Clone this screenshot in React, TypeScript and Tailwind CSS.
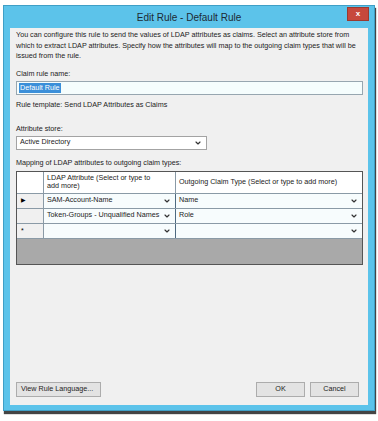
import { ChevronDown } from 'lucide-react';

const font = { fontFamily: '"Liberation Sans", Arial, sans-serif' };

function Chevron() {
  return <ChevronDown className="w-[8px] h-[8px] text-[#333]" strokeWidth={3.5} />;
}

function GridRow({ marker, attr, claim }: { marker?: string; attr: string; claim: string }) {
  return (
    <div className="flex h-[15px] border-t border-[#8a9aa6]">
      <div className="w-[27px] border-r border-[#8a9aa6] bg-[#f0f0f0] flex items-center pl-[4px] text-[7px] text-black">
        {marker === 'arrow' && <span className="text-[6px]">▶</span>}
        {marker === 'star' && <span className="text-[7px] leading-none">*</span>}
      </div>
      <div className="w-[132px] border-r border-[#4e6a80] flex items-center justify-between pl-[3px] pr-[4px] bg-[#f7fcfd] text-[7.2px] text-[#222]">
        <span>{attr}</span>
        <Chevron />
      </div>
      <div className="flex-1 flex items-center justify-between pl-[3px] pr-[4px] bg-[#f7fcfd] text-[7.2px] text-[#222]">
        <span>{claim}</span>
        <Chevron />
      </div>
    </div>
  );
}

export default function App() {
  return (
    <div className="w-[378px] h-[421px] bg-white overflow-hidden pt-[5px] pl-[3px]" style={font}>
      {/* window frame */}
      <div className="w-[372px] h-[406px] bg-[#5cc3ea] border border-[#3f9fc6] shadow-[1px_3px_1px_#444] flex flex-col">
        {/* title bar */}
        <div className="relative h-[22px] flex items-center justify-center text-[10px] text-[#1c2a33]">
          Edit Rule - Default Rule
          <div className="absolute right-[5px] top-[1px] w-[22px] h-[14px] bg-[#c7483c] border border-[#9a3a30] flex items-center justify-center text-white text-[8px] font-bold">
            x
          </div>
        </div>

        {/* client area */}
        <div className="mx-[6px] flex-1 mb-[5px] bg-[#f0f0f0] px-[6px] pt-[2px] text-[7.2px] text-[#222] flex flex-col">
          <p className="leading-[10.5px] whitespace-nowrap">
            You can configure this rule to send the values of LDAP attributes as claims. Select an attribute store from
            <br />
            which to extract LDAP attributes. Specify how the attributes will map to the outgoing claim types that will be
            <br />
            issued from the rule.
          </p>

          <div className="mt-[7px] leading-[10px]">Claim rule name:</div>
          <div className="mt-[2px] h-[14px] w-[347px] border border-[#97a6b0] bg-[#f5fdfd] flex items-center pl-[2px]">
            <span className="bg-[#3b8fd9] text-white px-[1px] leading-[10px]">Default Rule</span>
          </div>

          <div className="mt-[5px] leading-[10px]">Rule template: Send LDAP Attributes as Claims</div>

          <div className="mt-[14px] leading-[10px]">Attribute store:</div>
          <div className="mt-[2px] h-[14px] w-[191px] border border-[#a3a3a3] bg-white flex items-center justify-between pl-[3px] pr-[4px]">
            <span>Active Directory</span>
            <Chevron />
          </div>

          <div className="mt-[8px] leading-[10px]">Mapping of LDAP attributes to outgoing claim types:</div>

          {/* grid */}
          <div className="mt-[3px] w-[347px] h-[94px] border border-[#555] bg-[#a9a9a9] flex flex-col">
            <div className="flex h-[21px] bg-white">
              <div className="w-[27px] border-r border-[#8a9aa6]" />
              <div className="w-[132px] border-r border-[#8a9aa6] px-[3px] pt-[2px] leading-[8.5px] whitespace-nowrap">
                LDAP Attribute (Select or type to
                <br />
                add more)
              </div>
              <div className="flex-1 px-[3px] flex items-center">
                Outgoing Claim Type (Select or type to add more)
              </div>
            </div>
            <GridRow marker="arrow" attr="SAM-Account-Name" claim="Name" />
            <GridRow attr="Token-Groups - Unqualified Names" claim="Role" />
            <div className="border-b border-[#8a9aa6]">
              <GridRow marker="star" attr="" claim="" />
            </div>
          </div>

          <div className="flex-1" />

          {/* buttons */}
          <div className="flex items-center mb-[8px]">
            <button className="w-[85px] h-[15px] border border-[#acacac] bg-[#e3e3e3] text-[#222] text-left pl-[4px]">
              View Rule Language...
            </button>
            <div className="flex-1" />
            <button className="w-[49px] h-[15px] border border-[#acacac] bg-[#e3e3e3] text-[#222]">
              OK
            </button>
            <button className="ml-[5px] mr-[3px] w-[49px] h-[15px] border border-[#acacac] bg-[#e3e3e3] text-[#222]">
              Cancel
            </button>
          </div>
        </div>
      </div>
    </div>
  );
}
